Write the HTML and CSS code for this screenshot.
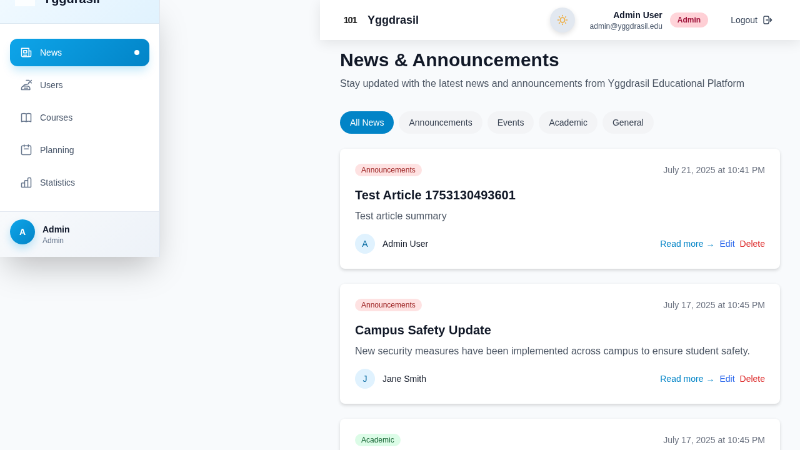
FILE: index.html
```html
<!DOCTYPE html>
<html lang="en">
<head>
<meta charset="utf-8">
<title>Yggdrasil</title>
<link rel="stylesheet" href="styles.css">
</head>
<body>
<div class="frame">
<div class="shell">
  <aside class="sidebar">
    <div class="side-head"><span class="side-logo"></span><span class="side-brand">Yggdrasil</span></div>
    <nav class="side-nav">
      <a class="nav-item active"><svg viewBox="0 0 24 24"><path d="M3 4h14v16H5a2 2 0 0 1-2-2zM17 9h4v9a2 2 0 0 1-4 0M7 8h6v5H7zM7 17h6"/></svg><span>News</span><i class="dot"></i></a>
      <a class="nav-item"><svg viewBox="0 0 24 24"><path d="M3 21v-2c0-3 2-5 5-5h5c4 0 6 2 6 5v2zM7 14c0-2 2-3 5-3M12 3h5M12 11c3 0 5-1 5-4M17 3l5 5M22 3l-5 5M8 18h7"/></svg><span>Users</span></a>
      <a class="nav-item"><svg viewBox="0 0 24 24"><path d="M12 5c-3-1-6-1-9 0v15c3-1 6-1 9 0 3-1 6-1 9 0V5c-3-1-6-1-9 0zM12 5v15"/></svg><span>Courses</span></a>
      <a class="nav-item"><svg viewBox="0 0 24 24"><path d="M8 2v4M16 2v4M8 10h8M5 4h14a2 2 0 0 1 2 2v13a2 2 0 0 1-2 2H5a2 2 0 0 1-2-2V6a2 2 0 0 1 2-2z"/></svg><span>Planning</span></a>
      <a class="nav-item"><svg viewBox="0 0 24 24"><path d="M3 14a1 1 0 0 1 1-1h5v8H4a1 1 0 0 1-1-1zM9 9a1 1 0 0 1 1-1h5v13H9zM15 5a2 2 0 0 1 2-2h2a2 2 0 0 1 2 2v15a1 1 0 0 1-1 1h-5z"/></svg><span>Statistics</span></a>
    </nav>
    <div class="side-user">
      <span class="user-avatar">A</span>
      <div><div class="user-name">Admin</div><div class="user-role">Admin</div></div>
    </div>
  </aside>
  <div class="content">
    <header class="topbar">
      <span class="logo">101</span><span class="brand">Yggdrasil</span>
      <span class="theme"><svg viewBox="0 0 24 24"><circle cx="12" cy="12" r="4.5"/><path d="M12 3v1.5M12 19.500v1.500M3 12h1.500M19.500 12h1.500M5.600 5.600l1 1M17.400 17.400l1 1M5.600 18.400l1-1M17.400 6.600l1-1"/></svg></span>
      <div class="account"><div class="account-name">Admin User</div><div class="account-mail">admin@yggdrasil.edu</div></div>
      <span class="role">Admin</span>
      <span class="logout">Logout<svg viewBox="0 0 24 24"><path d="M15 8V6a3 3 0 0 0-3-3H6a3 3 0 0 0-3 3v12a3 3 0 0 0 3 3h6a3 3 0 0 0 3-3v-2M9 12h13M18 8l4 4-4 4"/></svg></span>
    </header>
    <main class="main">
      <h1>News &amp; Announcements</h1>
      <p class="lead">Stay updated with the latest news and announcements from Yggdrasil Educational Platform</p>
      <div class="filters"><span class="chip on">All News</span><span class="chip">Announcements</span><span class="chip">Events</span><span class="chip">Academic</span><span class="chip">General</span></div>
      <article class="card">
        <div class="row"><span class="tag red">Announcements</span><span class="date">July 21, 2025 at 10:41 PM</span></div>
        <h2>Test Article 1753130493601</h2>
        <p class="summary">Test article summary</p>
        <div class="row foot"><span class="author"><span class="initial">A</span>Admin User</span><span class="actions"><a class="read">Read more →</a><a class="edit">Edit</a><a class="delete">Delete</a></span></div>
      </article>
      <article class="card">
        <div class="row"><span class="tag red">Announcements</span><span class="date">July 17, 2025 at 10:45 PM</span></div>
        <h2>Campus Safety Update</h2>
        <p class="summary">New security measures have been implemented across campus to ensure student safety.</p>
        <div class="row foot"><span class="author"><span class="initial">J</span>Jane Smith</span><span class="actions"><a class="read">Read more →</a><a class="edit">Edit</a><a class="delete">Delete</a></span></div>
      </article>
      <article class="card">
        <div class="row"><span class="tag green">Academic</span><span class="date">July 17, 2025 at 10:45 PM</span></div>
      </article>
    </main>
  </div>
</div>
</div>
</body>
</html>
```
FILE: styles.css
```css
* { box-sizing: border-box; }
html { overflow: hidden; }
body { margin: 0; height: 450px; overflow: hidden; background: #f9fafb; color: #111827; font-family: "Liberation Sans", Arial, sans-serif; font-size: 8.75px; line-height: 12.5px; }
h1, h2, p { margin: 0; }
svg { fill: none; stroke: currentColor; stroke-width: 1.8; stroke-linecap: round; stroke-linejoin: round; flex: none; }
.frame { width: 800px; height: 450px; overflow: hidden; contain: strict; }
/* Laid out on a 1280x720 canvas and scaled down to the window. */
.shell { display: flex; width: 800px; height: 450px; background: #f8fafc; overflow: hidden; zoom: 1.6; transform: scale(.625); transform-origin: 0 0; will-change: transform; }
.sidebar { width: 160px; height: 257px; flex: none; background: #fff; border-right: 1px solid #e2e8f0; box-shadow: 0 15.6px 31px -7px rgba(0, 0, 0, .25); }
.side-head { height: 24px; display: flex; padding-left: 15px; border-bottom: 1px solid #d9e6f0; background: linear-gradient(135deg, #f0f9ff, #e0f2fe); overflow: hidden; }
.side-logo { width: 20px; height: 6px; background: #fff; opacity: .8; }
.side-brand { margin: -10px 0 0 8px; font-size: 12.5px; line-height: 17.5px; font-weight: 700; color: #0f172a; }
.side-nav { height: 187px; padding: 15px 10px 0; display: flex; flex-direction: column; gap: 5px; }
.nav-item { height: 27.5px; display: flex; align-items: center; gap: 7.5px; padding: 0 10px; border-radius: 7.5px; color: #475569; }
.nav-item svg { width: 12.5px; height: 12.5px; }
.nav-item:not(.active) svg { color: #64748b; }
.nav-item.active { color: #fff; background: linear-gradient(135deg, #0ea5e9, #0284c7); box-shadow: 0 6px 9px -2px rgba(14, 165, 233, .25); }
.dot { width: 5px; height: 5px; border-radius: 50%; background: #fff; margin-left: auto; }
.side-user { height: 46px; padding: 0 10px 4px; display: flex; align-items: center; gap: 7.5px; border-top: 1px solid #e2e8f0; background: linear-gradient(135deg, #f8fafc, #edf2f8); }
.user-avatar { width: 25px; height: 25px; margin-top: -1px; border-radius: 50%; display: grid; place-items: center; color: #fff; font-weight: 700; background: linear-gradient(135deg, #0ea5e9, #0284c7); box-shadow: 0 4px 8px rgba(14, 165, 233, .25); }
.user-name { margin-top: 5px; font-weight: 700; line-height: 12px; color: #0f172a; }
.user-role { font-size: 7.5px; line-height: 10px; color: #64748b; }
.content { width: 480px; margin-left: 160px; }
.topbar { position: relative; height: 40px; display: flex; align-items: center; padding: 0 27.5px 0 20px; background: #fff; box-shadow: 0 3px 12px rgba(0, 0, 0, .09); }
.logo { width: 20px; height: 20px; display: grid; place-items: center; font-size: 9.2px; font-weight: 700; letter-spacing: -.8px; color: #222; }
.brand { margin-left: 7.5px; font-size: 11.25px; font-weight: 700; }
.theme { width: 25px; height: 25px; border-radius: 50%; margin-left: auto; display: grid; place-items: center; background: #e2e8f0; color: #f0a830; box-shadow: 0 2px 5px rgba(0, 0, 0, .12); }
.theme svg { width: 12.5px; height: 12.5px; }
.account { margin-left: 15px; text-align: right; }
.account-name { margin-top: 1px; font-weight: 700; line-height: 12px; color: #0f172a; }
.account-mail { font-size: 7.5px; line-height: 10px; color: #475569; }
.role { margin-left: 7.5px; padding: 0 7.5px; height: 15px; line-height: 15px; border-radius: 8px; font-size: 7.5px; font-weight: 700; color: #9f1239; background: linear-gradient(135deg, #ffd6db, #fecdd3); }
.logout { margin-left: 22.5px; display: flex; align-items: center; gap: 5px; color: #334155; }
.logout svg { width: 10px; height: 10px; stroke-width: 2; }
.main { padding: 8.75px 20px 0; }
h1 { font-size: 18.75px; line-height: 22.5px; font-weight: 700; }
.lead { margin-top: 5px; font-size: 10px; line-height: 15px; color: #4b5563; }
.filters { display: flex; gap: 5px; margin: 20px 0 15px; }
.chip { height: 22.5px; line-height: 22.5px; padding: 0 10px; border-radius: 12px; background: #f3f4f6; color: #374151; }
.on { background: #0284c7; color: #fff; }
.card { height: 120px; margin-bottom: 15px; padding: 15px; border-radius: 5px; background: #fff; box-shadow: 0 2px 4px -1px rgba(0, 0, 0, .12), 0 1px 3px rgba(0, 0, 0, .06); }
.row { display: flex; justify-content: space-between; align-items: center; }
.tag { font-size: 7.5px; line-height: 12.5px; padding: 0 6.25px; border-radius: 7px; }
.red { color: #991b1b; background: #fee2e2; }
.green { color: #166534; background: #dcfce7; }
.date { color: #6b7280; }
h2 { margin-top: 10px; font-size: 12.5px; line-height: 17.5px; font-weight: 700; }
.summary { margin-top: 5px; font-size: 10px; line-height: 15px; color: #4b5563; }
.foot { margin-top: 10px; }
.author { display: flex; align-items: center; gap: 7.5px; }
.initial { width: 20px; height: 20px; border-radius: 50%; display: grid; place-items: center; background: #e0f2fe; color: #0369a1; }
.actions { display: flex; gap: 5px; }
.read { color: #0284c7; }
.edit { color: #2563eb; }
.delete { color: #dc2626; }
```
